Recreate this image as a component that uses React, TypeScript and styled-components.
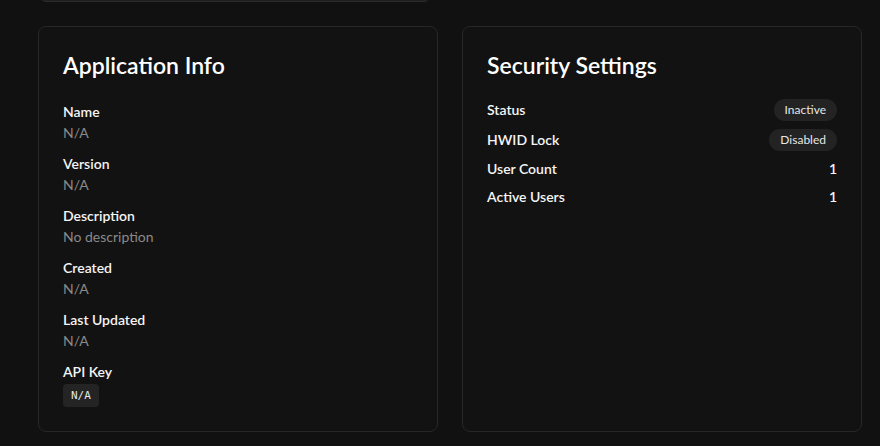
import styled, { createGlobalStyle } from 'styled-components';

const GlobalStyle = createGlobalStyle`
  html, body {
    margin: 0;
    padding: 0;
    background: #111111;
    overflow: hidden;
  }
  body {
    font-family: "Segoe UI", Lato, "Noto Sans", sans-serif;
    color: #f2f2f2;
  }
`;

const appInfo = [
  { label: 'Name', value: 'N/A' },
  { label: 'Version', value: 'N/A' },
  { label: 'Description', value: 'No description' },
  { label: 'Created', value: 'N/A' },
  { label: 'Last Updated', value: 'N/A' },
];

const security = [
  { label: 'Status', value: 'Inactive', badge: true },
  { label: 'HWID Lock', value: 'Disabled', badge: true },
  { label: 'User Count', value: '1' },
  { label: 'Active Users', value: '1' },
];

const App = () => {
  return (
    <>
      <GlobalStyle />
      <Page>
        <TopBar />
        <Grid>
          <Card>
            <CardTitle>Application Info</CardTitle>
            <InfoList>
              {appInfo.map((item) => (
                <InfoItem key={item.label}>
                  <InfoLabel>{item.label}</InfoLabel>
                  <InfoValue>{item.value}</InfoValue>
                </InfoItem>
              ))}
              <InfoItem>
                <InfoLabel>API Key</InfoLabel>
                <KeyChip>N/A</KeyChip>
              </InfoItem>
            </InfoList>
          </Card>
          <Card>
            <CardTitle compact>Security Settings</CardTitle>
            <SettingsList>
              {security.map((row) => (
                <SettingRow key={row.label}>
                  <SettingLabel>{row.label}</SettingLabel>
                  {row.badge ? (
                    <Badge>{row.value}</Badge>
                  ) : (
                    <SettingValue>{row.value}</SettingValue>
                  )}
                </SettingRow>
              ))}
            </SettingsList>
          </Card>
        </Grid>
      </Page>
    </>
  );
};

export default App;

const Page = styled.div`
  padding: 0 18px 0 38px;
  display: flex;
  flex-direction: column;
  width: 880px;
  height: 446px;
  box-sizing: border-box;
`;

const TopBar = styled.div`
  width: 388px;
  height: 20px;
  margin: -20px 0 0 2px;
  background: #1f1f1f;
  border: 1px solid #2b2b2b;
  border-radius: 6px;
`;

const Grid = styled.div`
  display: grid;
  grid-template-columns: 400px 400px;
  gap: 24px;
  margin-top: 24px;
`;

const Card = styled.section`
  height: 406px;
  box-sizing: border-box;
  background: #121212;
  border: 1px solid #272727;
  border-radius: 8px;
  padding: 24px;
`;

const CardTitle = styled.h2<{ compact?: boolean }>`
  margin: 0 0 ${({ compact }) => (compact ? '20px' : '23px')} 0;
  font-size: 23px;
  line-height: 28px;
  font-weight: 600;
  color: #ffffff;
`;

const InfoList = styled.div`
  display: flex;
  flex-direction: column;
  gap: 11px;
`;

const InfoItem = styled.div`
  display: flex;
  flex-direction: column;
  gap: 1px;
`;

const InfoLabel = styled.div`
  font-size: 14px;
  line-height: 20px;
  font-weight: 600;
  color: #f5f5f5;
`;

const InfoValue = styled.div`
  font-size: 14px;
  line-height: 20px;
  color: #8a8a8a;
`;

const KeyChip = styled.code`
  align-self: flex-start;
  margin-top: 1px;
  padding: 0 8px;
  height: 23px;
  line-height: 23px;
  border-radius: 4px;
  background: #242424;
  color: #e6e6e6;
  font-family: "DejaVu Sans Mono", "Liberation Mono", monospace;
  font-size: 11px;
`;

const SettingsList = styled.div`
  display: flex;
  flex-direction: column;
  gap: 8px;
`;

const SettingRow = styled.div`
  display: flex;
  align-items: center;
  justify-content: space-between;
  min-height: 20px;
`;

const SettingLabel = styled.span`
  font-size: 14px;
  line-height: 20px;
  font-weight: 600;
  color: #f5f5f5;
`;

const SettingValue = styled.span`
  font-size: 14px;
  line-height: 20px;
  font-weight: 600;
  color: #f5f5f5;
`;

const Badge = styled.span`
  height: 22px;
  line-height: 22px;
  padding: 0 11px;
  border-radius: 999px;
  background: #232323;
  color: #e6e6e6;
  font-size: 12px;
`;
